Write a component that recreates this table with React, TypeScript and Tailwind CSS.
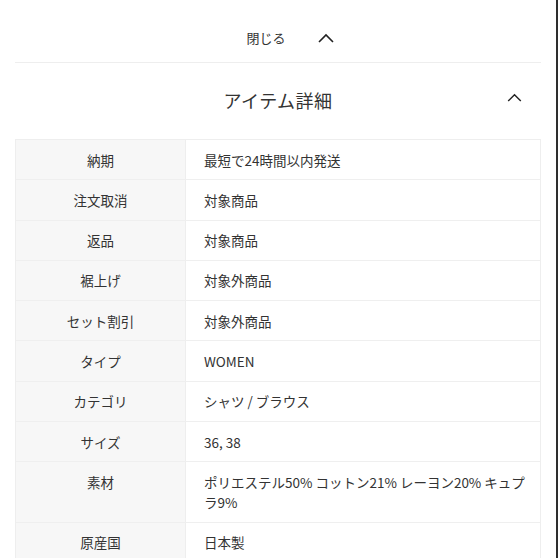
const rows: { label: string; value: string }[] = [
  { label: "納期", value: "最短で24時間以内発送" },
  { label: "注文取消", value: "対象商品" },
  { label: "返品", value: "対象商品" },
  { label: "裾上げ", value: "対象外商品" },
  { label: "セット割引", value: "対象外商品" },
  { label: "タイプ", value: "WOMEN" },
  { label: "カテゴリ", value: "シャツ / ブラウス" },
  { label: "サイズ", value: "36, 38" },
  { label: "素材", value: "ポリエステル50% コットン21% レーヨン20% キュプラ9%" },
  { label: "原産国", value: "日本製" },
];

function ChevronUp({ className }: { className?: string }) {
  return (
    <svg viewBox="0 0 16 10" className={className} fill="none" stroke="currentColor" strokeWidth="1.6">
      <path d="M1 9 L8 2 L15 9" />
    </svg>
  );
}

export default function App() {
  return (
    <div
      className="flex h-[558px] w-[558px] overflow-hidden bg-white text-[#333]"
      style={{ fontFamily: '"Noto Sans CJK JP", "Noto Sans", sans-serif' }}
    >
      <div className="flex-1 px-[15px]">
        <div className="flex h-[63px] items-center justify-center gap-8 border-b border-[#eeeeee] pt-[14px] pl-6">
          <span className="text-[13px]">閉じる</span>
          <ChevronUp className="h-[10px] w-[16px] text-[#222]" />
        </div>

        <div className="relative flex h-[76px] items-center justify-center pb-[2px]">
          <h2 className="text-[18px] font-normal tracking-[0.5px] text-[#333]">アイテム詳細</h2>
          <ChevronUp className="absolute right-[19px] top-[30px] h-[9px] w-[15px] text-[#222]" />
        </div>

        <div className="border border-[#eeeeee] text-[13.5px]">
          {rows.map((r) => (
            <div key={r.label} className="grid grid-cols-[170px_1fr] border-b border-[#efefef]">
              <div className="border-r border-[#eeeeee] bg-[#f7f7f7] py-[9.65px] text-center leading-5">
                {r.label}
              </div>
              <div className="py-[9.65px] pl-[18px] pr-[10px] leading-5">{r.value}</div>
            </div>
          ))}
        </div>
      </div>
      <div className="w-[2px] bg-[#2e2e2e]" />
    </div>
  );
}
